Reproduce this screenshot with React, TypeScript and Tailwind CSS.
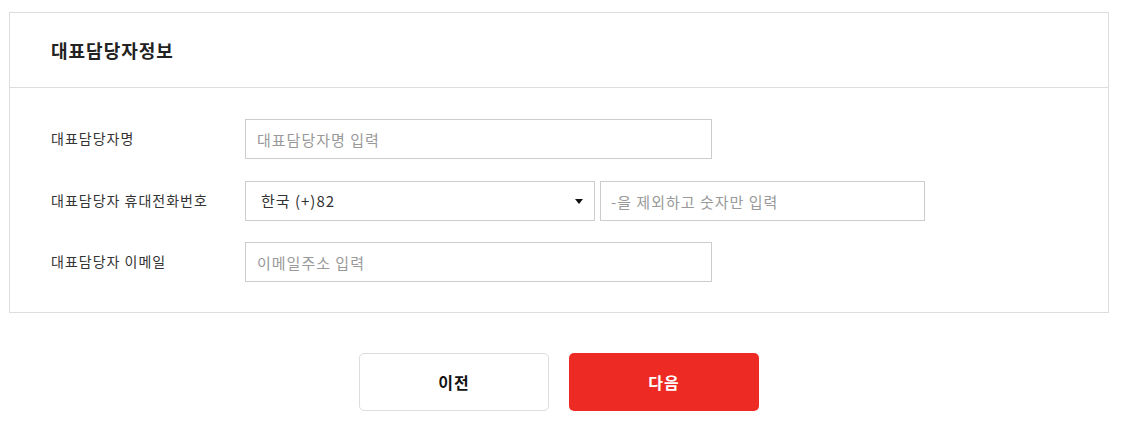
import React from "react";

const font = { fontFamily: '"Noto Sans CJK KR", "Noto Sans", sans-serif' };

export default function App() {
  return (
    <div className="bg-white w-[1121px] h-[421px] pt-[12px] pl-[9px]" style={font}>
      <div className="w-[1100px] border border-[#dddddd]">
        <div className="h-[75px] border-b border-[#dddddd] flex items-center pl-[41px]">
          <h2 className="text-[18px] font-bold text-[#222222] tracking-[1px]">대표담당자정보</h2>
        </div>
        <div className="pt-[31px] pb-[30px] pl-[41px] flex flex-col gap-[22px]">
          <div className="flex items-center h-[40px]">
            <div className="w-[194px] text-[14px] tracking-[1px] text-[#333333] -mt-[2px]">대표담당자명</div>
            <input
              className="w-[467px] h-[40px] border border-[#cccccc] px-[11px] text-[15px] tracking-[1px] text-[#333333] placeholder:text-[#999999] outline-none"
              placeholder="대표담당자명 입력"
            />
          </div>
          <div className="flex items-center h-[40px]">
            <div className="w-[194px] text-[14px] tracking-[1px] text-[#333333] -mt-[2px]">대표담당자 휴대전화번호</div>
            <div className="w-[350px] h-[40px] border border-[#cccccc] flex items-center justify-between pl-[15px] pr-[11px]">
              <span className="text-[15px] tracking-[1px] text-[#333333]">한국 (+)82</span>
              <svg width="8" height="5" viewBox="0 0 8 5">
                <path d="M0 0 L8 0 L4 5 Z" fill="#111" />
              </svg>
            </div>
            <input
              className="ml-[5px] w-[325px] h-[40px] border border-[#cccccc] px-[10px] text-[15px] tracking-[1px] text-[#333333] placeholder:text-[#999999] outline-none"
              placeholder="-을 제외하고 숫자만 입력"
            />
          </div>
          <div className="flex items-center h-[40px] -mt-[1px]">
            <div className="w-[194px] text-[14px] tracking-[1px] text-[#333333] -mt-[2px]">대표담당자 이메일</div>
            <input
              className="w-[467px] h-[40px] border border-[#cccccc] px-[11px] text-[15px] tracking-[1px] text-[#333333] placeholder:text-[#999999] outline-none"
              placeholder="이메일주소 입력"
            />
          </div>
        </div>
      </div>
      <div className="w-[1100px] flex justify-center gap-[20px] mt-[40px]">
        <button className="w-[190px] h-[58px] border border-[#dddddd] rounded-[5px] bg-white text-[16px] tracking-[1px] font-bold text-[#111111]">
          이전
        </button>
        <button className="w-[190px] h-[58px] rounded-[5px] bg-[#ee2a24] text-[16px] tracking-[1px] font-bold text-white">
          다음
        </button>
      </div>
    </div>
  );
}
